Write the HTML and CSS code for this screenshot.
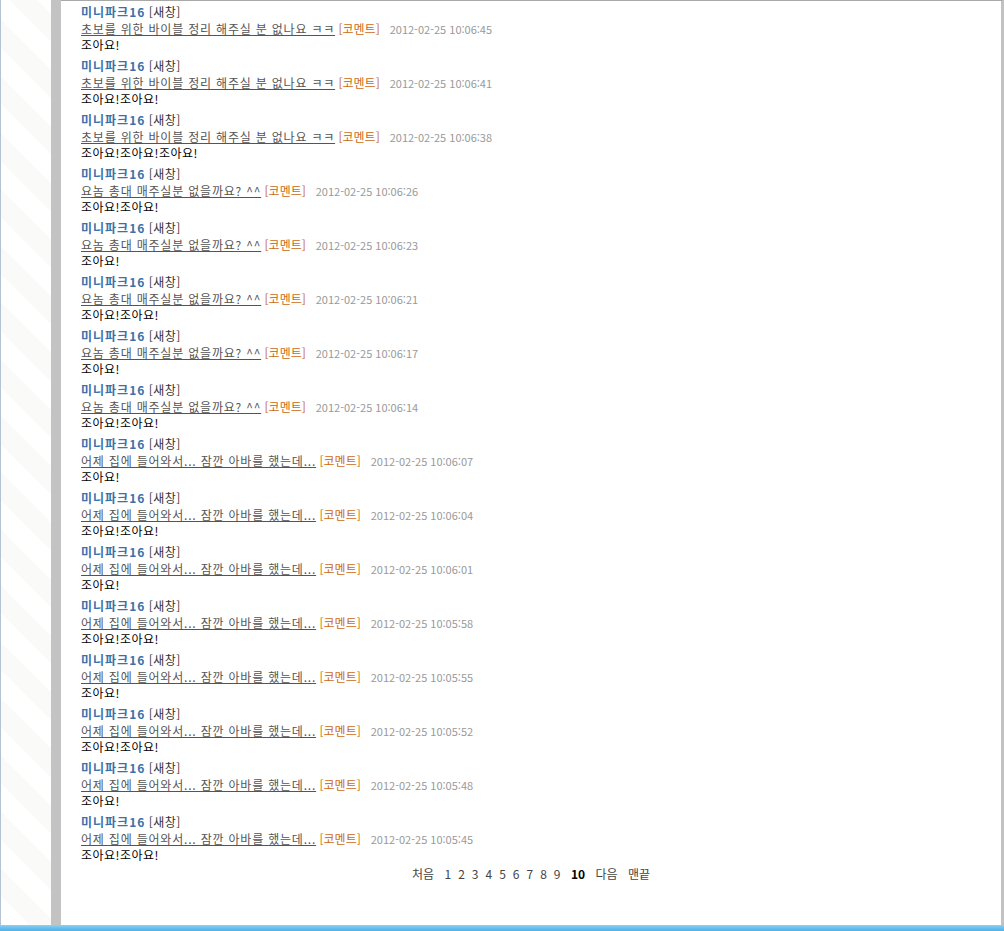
FILE: index.html
```html
<!DOCTYPE html>
<html lang="ko">
<head>
  <meta charset="UTF-8">
  <title>코멘트 목록</title>
  <link rel="stylesheet" href="styles.css">
</head>
<body>
  <div class="frame">
    <div class="stripes"></div>
    <div class="bar"></div>
    <div class="content">
      <ul class="list" id="list"></ul>
      <div class="paging">
        <a>처음</a>
        <a>1</a><a>2</a><a>3</a><a>4</a><a>5</a><a>6</a><a>7</a><a>8</a><a>9</a>
        <b>10</b>
        <a>다음</a>
        <a>맨끝</a>
      </div>
    </div>
  </div>
  <div class="taskbar"></div>

  <script>
    const t1 = '초보를 위한 바이블 정리 해주실 분 없나요 ㅋㅋ';
    const t2 = '요놈 총대 매주실분 없을까요? ^^';
    const t3 = '어제 집에 들어와서... 잠깐 아바를 했는데...';
    const rows = [
      [t1,'10:06:45',1],[t1,'10:06:41',2],[t1,'10:06:38',3],
      [t2,'10:06:26',2],[t2,'10:06:23',1],[t2,'10:06:21',2],[t2,'10:06:17',1],[t2,'10:06:14',2],
      [t3,'10:06:07',1],[t3,'10:06:04',2],[t3,'10:06:01',1],[t3,'10:05:58',2],
      [t3,'10:05:55',1],[t3,'10:05:52',2],[t3,'10:05:48',1],[t3,'10:05:45',2]
    ];
    const list = document.getElementById('list');
    list.innerHTML = rows.map(r => `
      <li>
        <div class="who"><span class="name">미니파크16</span> <a class="win">[새창]</a></div>
        <div class="title"><a class="subject">${r[0]}</a> <a class="cmt">[코멘트]</a><span class="date">2012-02-25 ${r[1]}</span></div>
        <div class="body">${'조아요!'.repeat(r[2])}</div>
      </li>`).join('');
  </script>
</body>
</html>
```

FILE: styles.css
```css
* { box-sizing: border-box; margin: 0; padding: 0; }
html, body { height: 100%; }
body { font-family: "Noto Sans CJK KR", "DejaVu Sans", sans-serif; font-size: 12px; color: #000; background: #fff; overflow: hidden; }
a { cursor: pointer; }
.frame { display: flex; height: 925px; }
.stripes { width: 51px; border-left: 1px solid #b4c2d4; background: repeating-linear-gradient(45deg, #fff 0 20px, #fafaf8 20px 40px); }
.bar { width: 10px; background: #c3c3c3; }
.content { flex: 1; border-top: 1px solid #a8a8a8; border-right: 3px solid #c2c2c2; padding: 2px 0 0 20px; }
.list { list-style: none; }
.list li { height: 54px; }
.who, .title { height: 17px; line-height: 17px; white-space: nowrap; }
.body { height: 16px; line-height: 15px; letter-spacing: 0.5px; }
.name { color: #3d6fa8; font-weight: bold; letter-spacing: 1px; }
.win { color: #333; letter-spacing: 0.5px; }
.subject { color: #555; text-decoration: underline; letter-spacing: 0.8px; }
.cmt { color: #cc6a14; }
.date { color: #999; font-size: 11px; margin-left: 10px; }
.paging { text-align: center; margin: -1px 0 0 -20px; color: #444; line-height: 16px; }
.paging a { margin: 0 3.5px; }
.paging b { margin: 0 3.5px; color: #000; }
.taskbar { height: 6px; border-top: 1px solid #9cc8e0; background: linear-gradient(#7fcaf0, #4fb0e6); }
```
